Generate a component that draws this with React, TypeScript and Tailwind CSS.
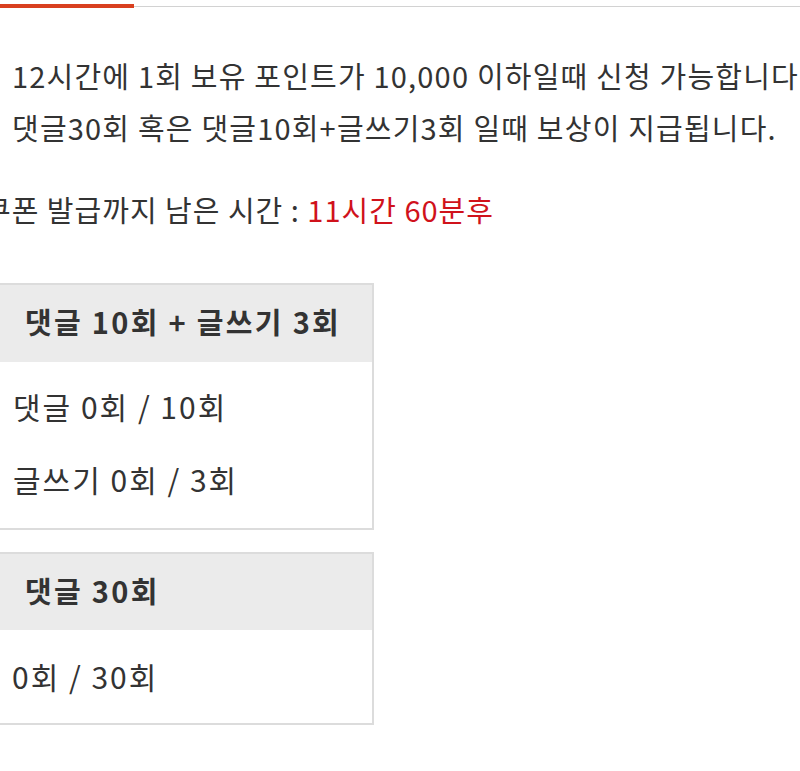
export default function App() {
  return (
    <div className="w-[800px] h-[771px] overflow-hidden bg-white text-[#333] font-['Noto_Sans_CJK_KR',sans-serif]">
      <div className="flex items-center h-[12px]">
        <div className="w-[134px] h-[4px] bg-[#d9401f]" />
        <div className="flex-1 h-px bg-[#d2d2d2]" />
      </div>

      <div className="pl-[12px] mt-[37px] text-[29px] leading-[52px] tracking-[1.2px] whitespace-nowrap">
        <p>12시간에 1회 보유 포인트가 10,000 이하일때 신청 가능합니다</p>
        <p>댓글30회 혹은 댓글10회+글쓰기3회 일때 보상이 지급됩니다.</p>
      </div>

      <p className="-ml-[16px] mt-[30px] text-[29px] leading-[52px] tracking-[1px] whitespace-nowrap">
        쿠폰 발급까지 남은 시간 : <span className="text-[#d0121b]">11시간 60분후</span>
      </p>

      <div className="-ml-[20px] mt-[48px] flex flex-col gap-[22px]">
        <div className="w-[394px] border-2 border-[#dcdcdc]">
          <div className="h-[77px] bg-[#ebebeb] flex items-center pl-[43px] pb-[3px] text-[29px] font-bold tracking-[2.3px]">
            댓글 10회 + 글쓰기 3회
          </div>
          <div className="pt-[8px] pb-[12px] pl-[31px] text-[30px] tracking-[2px]">
            <div className="h-[73px] flex items-center">댓글 0회 / 10회</div>
            <div className="h-[73px] flex items-center">글쓰기 0회 / 3회</div>
          </div>
        </div>
        <div className="w-[394px] border-2 border-[#dcdcdc]">
          <div className="h-[76px] bg-[#ebebeb] flex items-center pl-[43px] pb-[3px] text-[29px] font-bold tracking-[2.3px]">
            댓글 30회
          </div>
          <div className="pt-[10px] pb-[10px] pl-[30px] text-[30px] tracking-[2px]">
            <div className="h-[73px] flex items-center">0회 / 30회</div>
          </div>
        </div>
      </div>
    </div>
  );
}
